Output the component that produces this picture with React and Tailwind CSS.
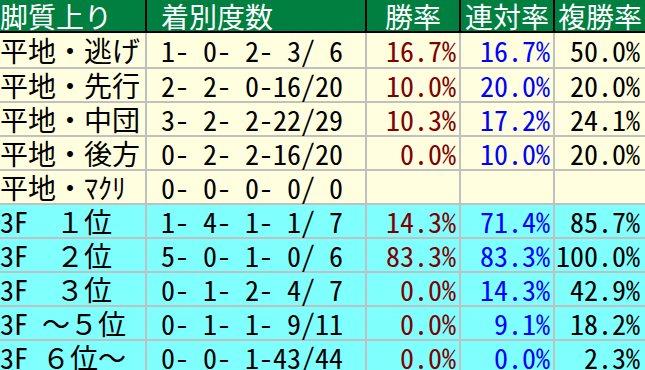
const rows = [
    { name: '平地・逃げ', rec: '1- 0- 2- 3/ 6', win: '16.7%', ren: '16.7%', fuku: '50.0%', bg: 'bg-[#ffffe0]' },
    { name: '平地・先行', rec: '2- 2- 0-16/20', win: '10.0%', ren: '20.0%', fuku: '20.0%', bg: 'bg-[#ffffe0]' },
    { name: '平地・中団', rec: '3- 2- 2-22/29', win: '10.3%', ren: '17.2%', fuku: '24.1%', bg: 'bg-[#ffffe0]' },
    { name: '平地・後方', rec: '0- 2- 2-16/20', win: '0.0%', ren: '10.0%', fuku: '20.0%', bg: 'bg-[#ffffe0]' },
    { name: '平地・ﾏｸﾘ', rec: '0- 0- 0- 0/ 0', win: '', ren: '', fuku: '', bg: 'bg-[#ffffe0]' },
    { name: '3F　１位', rec: '1- 4- 1- 1/ 7', win: '14.3%', ren: '71.4%', fuku: '85.7%', bg: 'bg-[#80ffff]' },
    { name: '3F　２位', rec: '5- 0- 1- 0/ 6', win: '83.3%', ren: '83.3%', fuku: '100.0%', bg: 'bg-[#80ffff]' },
    { name: '3F　３位', rec: '0- 1- 2- 4/ 7', win: '0.0%', ren: '14.3%', fuku: '42.9%', bg: 'bg-[#80ffff]' },
    { name: '3F ～５位', rec: '0- 1- 1- 9/11', win: '0.0%', ren: '9.1%', fuku: '18.2%', bg: 'bg-[#80ffff]' },
    { name: '3F ６位～', rec: '0- 0- 1-43/44', win: '0.0%', ren: '0.0%', fuku: '2.3%', bg: 'bg-[#80ffff]' },
];

export default function App() {
    return (
        <div className="h-[370px] w-[645px] overflow-hidden bg-white font-['Noto_Sans_Mono_CJK_JP','Noto_Sans_CJK_JP',monospace] text-[28px] leading-none whitespace-pre">
            {/* ヘッダー */}
            <div className="grid h-[33px] grid-cols-[145px_220px_94px_94px_92px] border-b-2 border-black bg-[#008040] text-white">
                <div className="flex items-center">脚質上り</div>
                <div className="flex items-center border-l-2 border-black pl-[14px]">着別度数</div>
                <div className="flex items-center justify-center border-l-2 border-black">勝率</div>
                <div className="flex items-center justify-center border-l-2 border-black">連対率</div>
                <div className="flex items-center justify-center border-l-2 border-black">複勝率</div>
            </div>

            {rows.map((row, i) => (
                <div
                    key={row.name}
                    className={`grid grid-cols-[145px_220px_94px_94px_92px] border-b-2 border-[#c0c0c0] text-black ${row.bg} ${i === 0 ? 'h-[36px]' : 'h-[34px]'}`}
                >
                    <div className="flex items-center">{row.name}</div>
                    <div className="flex items-center border-l-2 border-[#c0c0c0] pl-[14px]">{row.rec}</div>
                    <div className="flex items-center justify-end border-l-2 border-[#c0c0c0] pr-[3px] text-[#800000]">{row.win}</div>
                    <div className="flex items-center justify-end border-l-2 border-[#c0c0c0] pr-[3px] text-[#0000ff]">{row.ren}</div>
                    <div className="flex items-center justify-end border-l-2 border-[#c0c0c0] pr-[5px]">{row.fuku}</div>
                </div>
            ))}
        </div>
    );
}
